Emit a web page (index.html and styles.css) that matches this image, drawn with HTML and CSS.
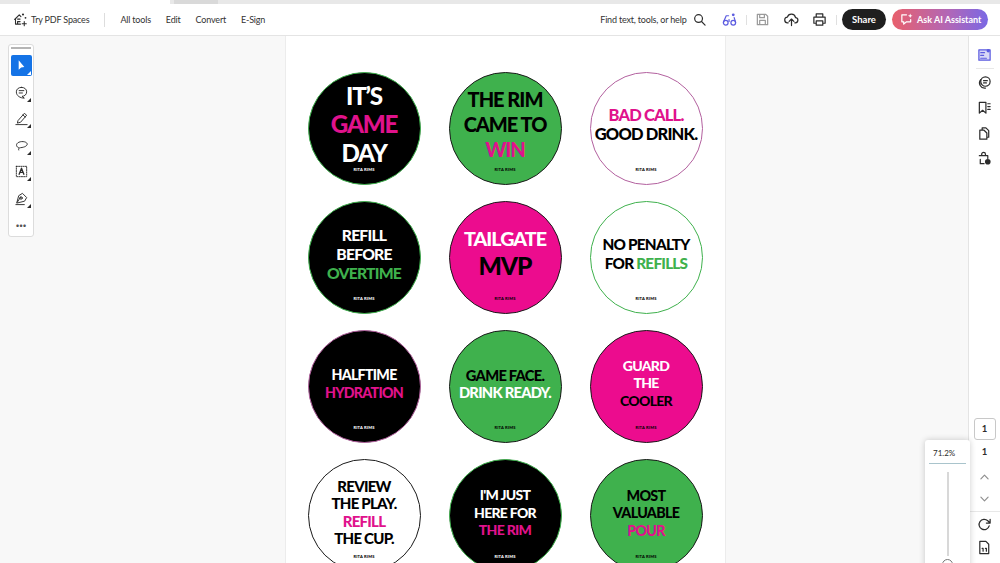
FILE: index.html
```html
<!DOCTYPE html>
<html lang="en">
<head>
    <meta charset="UTF-8">
    <meta name="viewport" content="width=device-width, initial-scale=1.0">
    <title>Rita Rims stickers</title>
    <link rel="stylesheet" href="styles.css">
</head>
<body>
    <div class="tabstrip">
        <div class="tab-gap-left"></div>
        <div class="tab-active"></div>
        <div class="tab-other"></div>
    </div>

    <div class="topbar">
        <div class="nav-left">
            <svg class="ico" viewBox="0 0 18 18"><path d="M2 9 7.500 3.500l2 2M3 8v6.500h6M5.500 8.500h3M5.500 11.500h3M5.500 14.500v-3" /><circle cx="12" cy="3" r="1.300" class="fill"/><circle cx="15" cy="7" r="1.100" class="fill"/><path d="M13.500 11.500v5M11 14h5"/></svg>
            <span class="nav-item">Try PDF Spaces</span>
            <span class="nav-sep"></span>
            <span class="nav-item">All tools</span>
            <span class="nav-item">Edit</span>
            <span class="nav-item">Convert</span>
            <span class="nav-item">E-Sign</span>
        </div>
        <div class="nav-right">
            <span class="nav-item">Find text, tools, or help</span>
            <svg class="ico search" viewBox="0 0 14 14"><circle cx="6" cy="6" r="4.200"/><path d="m9.200 9.200 3.800 3.800"/></svg>
            <svg class="ico purple" viewBox="0 0 16 16"><circle cx="4" cy="11.500" r="2.500"/><circle cx="12" cy="11.500" r="2.500"/><path d="M1.500 11 4.500 4H7M14.500 11 13 6M7.500 8v2"/><circle cx="12" cy="3" r="1.500" class="fill"/></svg>
            <span class="bar-sep"></span>
            <svg class="ico muted" viewBox="0 0 16 16"><path d="M2.500 2.500h9l2 2v9h-11zM5 2.500V6h5V2.500M5 13.500V9h6v4.500"/></svg>
            <svg class="ico" viewBox="0 0 16 16"><path d="M4.500 11.500H4a3 3 0 0 1-.4-6 4.500 4.500 0 0 1 8.700.4 2.800 2.800 0 0 1-.6 5.600h-.2M8 14.500V8M5.500 10 8 7.500l2.500 2.500"/></svg>
            <svg class="ico" viewBox="0 0 16 16"><path d="M4.500 5V2h7v3M4.500 12H2V5.500h12V12h-2.500M4.500 9.500h7V14h-7z"/></svg>
            <span class="bar-sep"></span>
            <span class="btn-share">Share</span>
            <span class="btn-ai">
                <svg class="ico-ai" viewBox="0 0 14 14"><path d="M7 2H2v7.500h2V12l3-2.500h4.500V7"/><path d="M11 .5l.7 1.800 1.800.7-1.800.7-.7 1.800-.7-1.800-1.800-.7 1.800-.7z" class="fill"/></svg>
                Ask AI Assistant
            </span>
        </div>
    </div>

    <div class="workspace">
        <div class="left-area">
            <div class="toolrail">
                <div class="rail-handle"></div>
                <div class="tool active">
                    <svg viewBox="0 0 16 16"><path d="M5 2.500v10l2.600-2.400 3.400-.4z" class="fill"/></svg>
                </div>
                <div class="tool corner">
                    <svg viewBox="0 0 16 16"><path d="M8 2.500c3.300 0 5.500 2 5.500 4.800 0 2.800-2.200 4.800-5 4.800l2.500 1.900c-4.500 0-8.500-2.500-8.500-6.700 0-2.800 2.200-4.800 5.500-4.800zM5.500 6h5M5.500 8.500H9"/></svg>
                </div>
                <div class="tool corner">
                    <svg viewBox="0 0 16 16"><path d="m4.500 10 6.500-7.500 2.500 2-6.500 7.500-3 .8zM9.500 4.200l2.500 2.200M2 14.500h12"/></svg>
                </div>
                <div class="tool corner">
                    <svg viewBox="0 0 16 16"><path d="M5 10.500C2.500 9.500 1.800 7 4 5.200 7 3 13 3.500 14 6c.7 2-2.500 4-7 4.300-1.500.1-2.600 1-2 2.500"/></svg>
                </div>
                <div class="tool corner">
                    <svg viewBox="0 0 16 16"><path d="M2.500 2.500h11v11h-11z" class="dash"/><path d="M5.500 11 8 4.500l2.500 6.500M6.300 9h3.400" class="bold"/></svg>
                </div>
                <div class="tool corner">
                    <svg viewBox="0 0 16 16"><path d="M3 12.500 5 5l4-2.500 4.500 4.500-2 3.500zM2 14.500h9M7 6.500l-3.500 5.500"/><circle cx="7.500" cy="7.500" r="1.300"/></svg>
                </div>
                <div class="tool dots">···</div>
            </div>
        </div>

        <div class="page">
            <div class="sticker-grid">
                <div class="sticker bg-black edge-green s-gameday">
                    <span class="c-white">IT’S</span><span class="c-pink">GAME</span><span class="c-white">DAY</span>
                    <span class="brand c-white">RITA RIMS</span>
                </div>
                <div class="sticker bg-green edge-black s-rim">
                    <span class="c-black">THE RIM</span><span class="c-black">CAME TO</span><span class="c-pink">WIN</span>
                    <span class="brand c-black">RITA RIMS</span>
                </div>
                <div class="sticker bg-white edge-pink s-badcall">
                    <span class="c-pink">BAD CALL.</span><span class="c-black">GOOD DRINK.</span>
                    <span class="brand c-black">RITA RIMS</span>
                </div>

                <div class="sticker bg-black edge-green s-refill">
                    <span class="c-white">REFILL</span><span class="c-white">BEFORE</span><span class="c-green">OVERTIME</span>
                    <span class="brand c-white">RITA RIMS</span>
                </div>
                <div class="sticker bg-pink edge-black s-tailgate">
                    <span class="c-white">TAILGATE</span><span class="c-black big">MVP</span>
                    <span class="brand c-black">RITA RIMS</span>
                </div>
                <div class="sticker bg-white edge-green s-penalty">
                    <span class="c-black">NO PENALTY</span><span class="c-black">FOR <b class="c-green">REFILLS</b></span>
                    <span class="brand c-black">RITA RIMS</span>
                </div>

                <div class="sticker bg-black edge-pink s-halftime">
                    <span class="c-white">HALFTIME</span><span class="c-pink">HYDRATION</span>
                    <span class="brand c-white">RITA RIMS</span>
                </div>
                <div class="sticker bg-green edge-black s-gameface">
                    <span class="c-black">GAME FACE.</span><span class="c-white">DRINK READY.</span>
                    <span class="brand c-black">RITA RIMS</span>
                </div>
                <div class="sticker bg-pink edge-black s-guard">
                    <span class="c-white">GUARD</span><span class="c-white">THE</span><span class="c-black">COOLER</span>
                    <span class="brand c-black">RITA RIMS</span>
                </div>

                <div class="sticker bg-white edge-black s-review">
                    <span class="c-black">REVIEW</span><span class="c-black">THE PLAY.</span><span class="c-pink">REFILL</span><span class="c-black">THE CUP.</span>
                    <span class="brand c-black">RITA RIMS</span>
                </div>
                <div class="sticker bg-black edge-green s-justhere">
                    <span class="c-white">I'M JUST</span><span class="c-white">HERE FOR</span><span class="c-pink">THE RIM</span>
                    <span class="brand c-white">RITA RIMS</span>
                </div>
                <div class="sticker bg-green edge-black s-valuable">
                    <span class="c-black">MOST</span><span class="c-black">VALUABLE</span><span class="c-pink">POUR</span>
                    <span class="brand c-black">RITA RIMS</span>
                </div>
            </div>
        </div>

        <div class="gutter"></div>

        <div class="right-rail">
            <div class="rail-top">
                <svg class="ico purple panel" viewBox="0 0 16 16"><path d="M2 3h12v11H2z" class="tint"/><path d="M4 6h4M4 9h3M4 12h6"/><circle cx="12" cy="4" r="1.800" class="fill"/></svg>
                <div class="rail-line"></div>
                <svg class="ico" viewBox="0 0 16 16"><circle cx="9" cy="7" r="5"/><path d="M4 5a5.500 5.500 0 0 0 5 9M7 6h4M7 8.500h3"/></svg>
                <svg class="ico" viewBox="0 0 16 16"><path d="M2.500 2.500h7V14L6 11l-3.500 3zM11.500 4H14M11.500 7H14M11.500 10H14"/></svg>
                <svg class="ico" viewBox="0 0 16 16"><path d="M5.500 4.500V2h4l3 3v7h-2M3 4.500h4.500l3 3V14H3z"/></svg>
                <svg class="ico" viewBox="0 0 16 16"><path d="M5 5V3.500a2 2 0 0 1 4 0V5M2.500 5h9v3M3.500 9v4.500h4"/><circle cx="11.500" cy="11.500" r="3" class="fill"/></svg>
            </div>
            <div class="rail-bottom">
                <div class="page-box">1</div>
                <div class="page-total">1</div>
                <svg class="chev" viewBox="0 0 10 6"><path d="M1 5l4-4 4 4"/></svg>
                <svg class="chev chev-down" viewBox="0 0 10 6"><path d="M1 1l4 4 4-4"/></svg>
                <div class="rail-line wide"></div>
                <svg class="ico" viewBox="0 0 16 16"><path d="M13 9.500A5.500 5.500 0 1 1 11.500 4L14 6.500M14 2.500v4h-4"/></svg>
                <svg class="ico doc" viewBox="0 0 16 16"><path d="M3 1.500h6.500l3 3v10H3zM5.500 9h1v3M9 9h1v3"/></svg>
            </div>
        </div>

        <div class="zoom-pop">
            <div class="zoom-value">71.2%</div>
            <div class="zoom-track"><span class="zoom-thumb"></span></div>
        </div>
    </div>
</body>
</html>
```

FILE: styles.css
```css
* {
    margin: 0;
    padding: 0;
    box-sizing: border-box;
}

html, body {
    width: 1000px;
    height: 563px;
    overflow: hidden;
}

body {
    background: #f8f8f8;
    color: #2c2c2c;
    font-family: 'Lato', sans-serif;
    display: flex;
    flex-direction: column;
}

svg {
    fill: none;
    stroke: currentColor;
    stroke-width: 1.3;
    stroke-linecap: round;
    stroke-linejoin: round;
}

svg .fill {
    fill: currentColor;
    stroke: none;
}

/* tab strip */
.tabstrip {
    height: 4px;
    display: flex;
    background: #e8e8e8;
}

.tab-gap-left {
    width: 30px;
}

.tab-active {
    width: 140px;
    background: #fff;
}

.tab-other {
    width: 44px;
    margin-left: 4px;
    background: #d9d9d9;
}

/* top toolbar */
.topbar {
    height: 32px;
    background: #fff;
    border-bottom: 1px solid #e4e4e4;
    display: flex;
    align-items: center;
    justify-content: space-between;
    padding: 0 12px 0 13px;
}

.nav-left, .nav-right {
    display: flex;
    align-items: center;
}

.nav-item {
    font-size: 9px;
    letter-spacing: -0.02em;
    color: #333;
    white-space: nowrap;
}

.nav-left .nav-item {
    margin-right: 15px;
}

.nav-left .ico {
    margin-right: 3px;
}

.nav-sep {
    width: 1px;
    height: 14px;
    background: #ddd;
    margin-right: 15px;
}

.ico {
    width: 15px;
    height: 15px;
    color: #2c2c2c;
    flex: none;
}

.nav-right .ico {
    margin-left: 13.5px;
}

.nav-right .search {
    margin-left: 6px;
    width: 13px;
    height: 13px;
}

.nav-right .purple {
    margin-left: 16px;
}

.purple {
    color: #5c5ce0;
}

.muted {
    color: #9a9a9a;
}

.bar-sep {
    width: 1px;
    height: 10px;
    background: #e0e0e0;
    margin-left: 9px;
    margin-right: -5px;
}

.btn-share {
    background: #1f1f1f;
    color: #fff;
    font-size: 9.5px;
    font-weight: 700;
    height: 21px;
    width: 44px;
    border-radius: 11px;
    display: flex;
    align-items: center;
    justify-content: center;
    margin-left: 10px;
}

.btn-ai {
    background: linear-gradient(90deg, #e8606c, #b067b8 60%, #7a68e4);
    color: #fff;
    font-size: 9px;
    font-weight: 700;
    height: 21px;
    width: 96px;
    border-radius: 11px;
    display: flex;
    align-items: center;
    gap: 4px;
    padding-left: 8px;
    margin-left: 6px;
    white-space: nowrap;
}

.ico-ai {
    width: 13px;
    height: 13px;
    color: #fff;
    flex: none;
}

/* main area */
.workspace {
    flex: 1;
    display: flex;
    position: relative;
    min-height: 0;
}

.left-area {
    width: 285px;
    padding: 8px 0 0 8px;
    flex: none;
}

.toolrail {
    width: 26px;
    height: 193px;
    background: #fff;
    border: 1px solid #dcdcdc;
    border-radius: 3px;
    display: flex;
    flex-direction: column;
    align-items: center;
    padding-top: 2px;
}

.rail-handle {
    width: 20px;
    height: 2px;
    background: #b5b5b5;
    margin-bottom: 6px;
    flex: none;
}

.tool {
    width: 21px;
    height: 21px;
    flex: none;
    margin-bottom: 5.6px;
    border-radius: 2px;
    display: flex;
    align-items: center;
    justify-content: center;
    position: relative;
    color: #2c2c2c;
}

.tool svg {
    width: 15px;
    height: 15px;
    stroke-width: 1;
}

.tool.active {
    background: #1473e6;
    color: #fff;
}

.tool.active::after, .corner::after {
    content: "";
    position: absolute;
    right: 1px;
    bottom: 1px;
    border-style: solid;
    border-width: 0 0 4px 4px;
    border-color: transparent transparent #2c2c2c transparent;
}

.tool.active::after {
    border-bottom-color: #fff;
}

.tool .dash {
    stroke-dasharray: 1.2 1.2;
}

.tool .bold {
    stroke-width: 1.4;
}

.tool.dots {
    height: 20px;
    margin-bottom: 0;
    font-size: 13px;
    font-weight: 700;
    color: #555;
}

/* document page */
.page {
    width: 441px;
    flex: none;
    background: #fff;
    border-left: 1px solid #ececec;
    border-right: 1px solid #ececec;
    padding-top: 36px;
    overflow: hidden;
}

.sticker-grid {
    display: grid;
    grid-template-columns: repeat(3, 113px);
    grid-auto-rows: 113px;
    column-gap: 28px;
    row-gap: 16px;
    justify-content: center;
    margin-left: -1px;
}

.sticker {
    border-radius: 50%;
    border: 1px solid #000;
    display: flex;
    flex-direction: column;
    align-items: center;
    justify-content: center;
    padding-bottom: 8px;
    position: relative;
    font-weight: 900;
    text-align: center;
    white-space: nowrap;
    letter-spacing: -0.05em;
}

.sticker b {
    font-weight: 900;
}

.bg-black { background: #000; }
.bg-green { background: #3fb14d; }
.bg-pink { background: #ec0c8e; }
.bg-white { background: #fff; }

.edge-green { border-color: #3fb14d; }
.edge-black { border-color: #1a1a1a; }
.edge-pink { border-color: #b3619f; }

.c-white { color: #fff; }
.c-black { color: #000; }
.c-pink { color: #e0128c; }
.c-green { color: #3fb14d; }

.brand {
    position: absolute;
    left: 0;
    right: 0;
    bottom: 12px;
    font-size: 4px;
    line-height: 5px;
    letter-spacing: 0.2px;
}

.s-gameday {
    font-size: 24.2px;
    line-height: 28.5px;
}

.s-rim {
    font-size: 20px;
    line-height: 25px;
}

.s-badcall {
    font-size: 16.5px;
    line-height: 19px;
}

.s-refill {
    font-size: 15.7px;
    line-height: 19px;
    padding-bottom: 6px;
}

.s-tailgate {
    font-size: 19.7px;
    line-height: 24px;
}

.s-tailgate .big {
    font-size: 24.6px;
    line-height: 30px;
}

.s-penalty {
    font-size: 15.3px;
    line-height: 18.5px;
}

.s-halftime {
    font-size: 14.2px;
    line-height: 18px;
    padding-bottom: 5px;
}

.s-gameface {
    font-size: 14.7px;
    line-height: 17.5px;
    padding-bottom: 5px;
}

.s-guard {
    font-size: 14px;
    line-height: 17.5px;
    padding-bottom: 7px;
}

.s-review {
    font-size: 15px;
    line-height: 17.5px;
    padding-bottom: 6px;
}

.s-justhere {
    font-size: 14px;
    line-height: 17.5px;
    padding-bottom: 6px;
}

.s-valuable {
    font-size: 14.3px;
    line-height: 17.5px;
    padding-bottom: 5px;
}

.gutter {
    flex: 1;
}

/* right rail */
.right-rail {
    width: 32px;
    flex: none;
    background: #fff;
    border-left: 1px solid #e4e4e4;
    display: flex;
    flex-direction: column;
    justify-content: space-between;
    align-items: center;
}

.rail-top {
    display: flex;
    flex-direction: column;
    align-items: center;
    padding-top: 10.5px;
}

.rail-top .ico {
    margin-bottom: 10.5px;
}

.rail-top .panel {
    margin-bottom: 6px;
}

.rail-top .rail-line {
    margin-bottom: 6px;
}

.rail-line {
    width: 18px;
    height: 1px;
    background: #e8e8e8;
}

.rail-line.wide {
    width: 31px;
}

.tint {
    fill: #d8d8f6;
}

.rail-bottom {
    display: flex;
    flex-direction: column;
    align-items: center;
    padding-bottom: 8.5px;
}

.page-box {
    width: 22px;
    height: 22px;
    border: 1px solid #c8c8c8;
    border-radius: 3px;
    font-size: 9.5px;
    font-weight: 700;
    display: flex;
    align-items: center;
    justify-content: center;
}

.page-total {
    font-size: 9.5px;
    font-weight: 700;
    margin: 5.5px 0 15.5px;
    line-height: 13px;
}

.chev {
    width: 9px;
    height: 6px;
    color: #8e8e8e;
    margin-bottom: 16px;
}

.chev-down {
    margin-bottom: 9px;
}

.rail-bottom .rail-line {
    margin-bottom: 5px;
}

.rail-bottom .ico {
    margin-bottom: 8px;
}

.rail-bottom .doc {
    margin-bottom: 0;
}

/* zoom popup */
.zoom-pop {
    position: absolute;
    left: 925px;
    top: 404px;
    width: 45px;
    height: 130px;
    background: #fff;
    border-radius: 3px;
    box-shadow: 0 0 6px rgba(0, 0, 0, 0.2);
    padding: 8px 4px 0;
    display: flex;
    flex-direction: column;
    align-items: center;
}

.zoom-value {
    font-size: 8px;
    width: 100%;
    padding-left: 4px;
    padding-bottom: 4px;
    line-height: 11px;
    border-bottom: 1px solid #a9c4cc;
}

.zoom-track {
    width: 2px;
    height: 84px;
    background: #d8d8d8;
    margin-top: 8px;
    position: relative;
}

.zoom-thumb {
    position: absolute;
    left: -4.5px;
    top: 87px;
    width: 11px;
    height: 11px;
    background: #fff;
    border: 1px solid #777;
    border-radius: 50%;
}
```
